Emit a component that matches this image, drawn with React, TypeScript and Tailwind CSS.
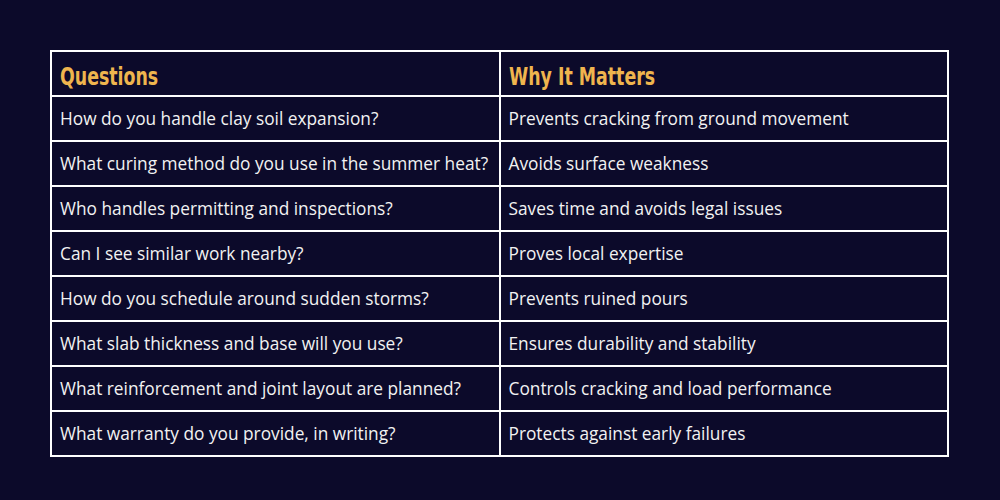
import React from 'react';

const rows: [string, string][] = [
  ['How do you handle clay soil expansion?', 'Prevents cracking from ground movement'],
  ['What curing method do you use in the summer heat?', 'Avoids surface weakness'],
  ['Who handles permitting and inspections?', 'Saves time and avoids legal issues'],
  ['Can I see similar work nearby?', 'Proves local expertise'],
  ['How do you schedule around sudden storms?', 'Prevents ruined pours'],
  ['What slab thickness and base will you use?', 'Ensures durability and stability'],
  ['What reinforcement and joint layout are planned?', 'Controls cracking and load performance'],
  ['What warranty do you provide, in writing?', 'Protects against early failures'],
];

export default function App() {
  return (
    <div className="w-[1000px] h-[500px] bg-[#0c0a2a] pt-[50px] pl-[50px]">
      <table className="w-[899px] border-collapse table-fixed">
        <thead>
          <tr className="h-[45px]">
            {['Questions', 'Why It Matters'].map((h) => (
              <th
                key={h}
                className="border-2 border-white text-left pl-[8px] pt-[6px] align-middle text-[23px] leading-none font-bold text-[#efb54e] font-['DejaVu_Sans_Condensed','DejaVu_Sans',sans-serif]"
              >
                <span className="inline-block origin-left scale-x-[0.84] scale-y-[1.08] whitespace-nowrap">{h}</span>
              </th>
            ))}
          </tr>
        </thead>
        <tbody>
          {rows.map(([q, w]) => (
            <tr key={q} className="h-[45px]">
              <td className="border-2 border-white pl-[8px] pt-px text-[17.3px] text-[#f2f2f2] font-['Open_Sans',sans-serif]">{q}</td>
              <td className="border-2 border-white pl-[8px] pt-px text-[17.3px] text-[#f2f2f2] font-['Open_Sans',sans-serif]">{w}</td>
            </tr>
          ))}
        </tbody>
      </table>
    </div>
  );
}
